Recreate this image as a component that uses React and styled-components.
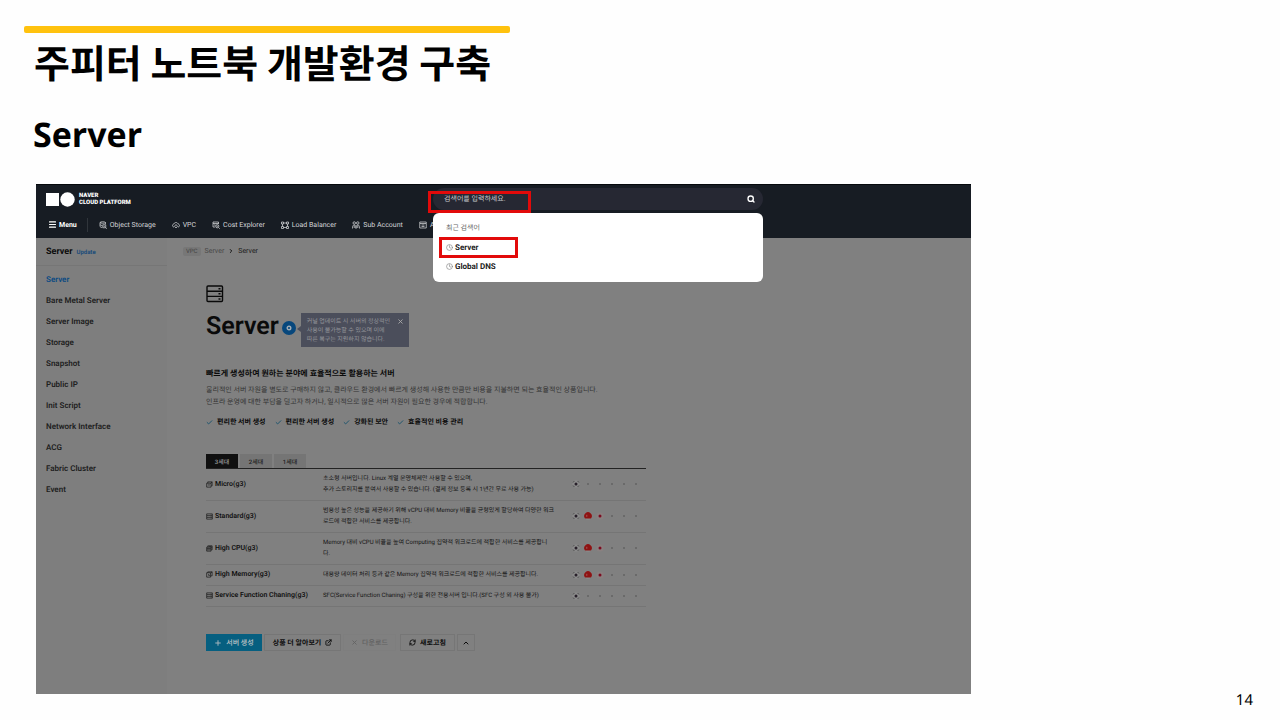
import React from 'react';
import styled, { createGlobalStyle } from 'styled-components';
import { Check, ChevronRight, ChevronUp, Clock, ExternalLink, Menu, Plus, RefreshCw, Search, X } from 'lucide-react';

const GlobalStyle = createGlobalStyle`
  * { box-sizing: border-box; }
  body {
    margin: 0;
    background: #fefefe;
    font-family: Roboto, "Noto Sans CJK KR", sans-serif;
    text-rendering: geometricPrecision;
  }
  button, input { font-family: inherit; text-rendering: inherit; }
  a { color: inherit; text-decoration: none; }
  svg { display: block; flex: none; }
`;

const Slide = styled.div`
  display: flex;
  flex-direction: column;
  min-height: 100vh;
  padding-top: 26px;
`;

const Accent = styled.div`
  width: 38%;
  height: 7px;
  margin-left: 24px;
  border-radius: 2px;
  background: #ffc20e;
`;

const SlideTitle = styled.h1`
  margin: 0 0 0 34px;
  font: 700 39px/58px "Noto Sans CJK KR", sans-serif;
  color: #000;
`;

const SlideSubtitle = styled.h2`
  margin: 18px 0 25px 33px;
  font: 700 34px/50px "Open Sans", sans-serif;
  color: #000;
`;

const SlideBody = styled.div`
  display: flex;
  flex: 1;
  padding-left: 36px;
`;

const PageNumber = styled.footer`
  flex: none;
  align-self: flex-end;
  width: 309px;
  padding: 0 27px 10px 0;
  text-align: right;
  font: 400 15px/20px "Noto Sans", sans-serif;
  color: #000;
`;

const Console = styled.div`
  flex: 1;
  align-self: flex-start;
  min-width: 0;
  margin-bottom: 26px;
  background: #808080;
  color: #141414;
`;

const Header = styled.header`
  background: #171c23;
  color: #d4d5d8;
  border-top: 1px solid #06090d;
`;

const TopRow = styled.div`
  display: flex;
  padding: 3px 0;
`;

const Brand = styled.a`
  display: flex;
  align-items: center;
  gap: 3px;
  width: 397px;
  padding-left: 10px;
  color: #fff;
  font-size: 6px;
  font-weight: 900;
  line-height: 7px;
`;

const SearchArea = styled.div`
  position: relative;
  width: 330px;
`;

const SearchField = styled.label`
  display: flex;
  align-items: center;
  height: 22px;
  padding: 0 8px 0 11px;
  border-radius: 11px;
  background: #262833;
  color: #fff;
`;

const SearchInput = styled.input`
  flex: 1;
  min-width: 0;
  padding: 0;
  border: 0;
  outline: 0;
  background: none;
  color: #fff;
  font-size: 7px;
  &::placeholder { color: #c9cacd; opacity: 1; }
`;

const Recent = styled.div`
  position: absolute;
  top: 25px;
  left: 0;
  right: 0;
  z-index: 2;
  padding: 6px 13px;
  border-radius: 6px;
  background: #fff;
`;

const RecentTitle = styled.div`
  color: #666;
  font-size: 7px;
  line-height: 19px;
`;

const RecentLink = styled.a`
  display: flex;
  align-items: center;
  gap: 2px;
  height: 19px;
  color: #222;
  font-size: 8px;
  font-weight: 700;
  svg { color: #777; }
`;

const Mark = styled.div`
  position: absolute;
  z-index: 3;
  top: ${(p) => p.$top}px;
  left: ${(p) => p.$left}px;
  width: ${(p) => p.$width}px;
  height: ${(p) => p.$height}px;
  border: 3px solid #e20a0a;
  pointer-events: none;
`;

const Nav = styled.nav`
  display: flex;
  align-items: center;
  gap: 16px;
  height: 25px;
  padding: 0 0 2px 12px;
  font-size: 7px;
  white-space: nowrap;
`;

const NavLink = styled.a`
  display: flex;
  align-items: center;
  gap: 3px;
`;

const MenuButton = styled.button`
  display: flex;
  align-items: center;
  gap: 2px;
  height: 14px;
  padding: 0 10px 0 0;
  margin-right: -5px;
  border: 0;
  border-right: 1px solid #30353b;
  background: none;
  color: #fff;
  font-size: 7px;
  font-weight: 700;
`;

const Columns = styled.div`
  display: flex;
`;

const Sidebar = styled.aside`
  flex: none;
  width: 131px;
  background: #7e7e7e;
`;

const SidebarHead = styled.div`
  display: flex;
  align-items: center;
  gap: 4px;
  height: 28px;
  padding: 1px 0 0 10px;
  border-bottom: 1px solid #767676;
  color: #0c0c0c;
  font-size: 9px;
  font-weight: 700;
`;

const Update = styled.span`
  color: #1c4c7a;
  font-size: 6px;
`;

const SideList = styled.ul`
  margin: 0;
  padding: 3px 0 0 10px;
  list-style: none;
  font-size: 8px;
  font-weight: 600;
  line-height: 21px;
`;

const SideLink = styled.a`
  color: ${(p) => (p.$active ? '#0b4a82' : '#202020')};
`;

const Main = styled.main`
  flex: 1;
  min-width: 0;
  padding-bottom: 43px;
`;

const Crumbs = styled.div`
  display: flex;
  align-items: center;
  gap: 4px;
  height: 26px;
  padding-left: 16px;
  font-size: 7px;
`;

const Crumb = styled.a`
  color: ${(p) => (p.$muted ? '#484848' : '#1b1b1b')};
`;

const Pill = styled.span`
  padding: 0 3px;
  border-radius: 2px;
  background: #777;
  color: #444;
  font-size: 6px;
  line-height: 9px;
`;

const Content = styled.div`
  padding: 21px 20px 0 39px;
`;

const TitleRow = styled.div`
  display: flex;
  margin-top: 10px;
`;

const Title = styled.h3`
  margin: 0;
  color: #0a0a0a;
  font-size: 25px;
  line-height: 27px;
  font-weight: 600;
`;

const Badge = styled.span`
  display: flex;
  align-items: center;
  justify-content: center;
  width: 14px;
  height: 14px;
  margin: 8px 5px 0 3px;
  border-radius: 50%;
  background: #07477c;
`;

const Notice = styled.div`
  position: relative;
  display: flex;
  gap: 7px;
  padding: 4px 5px 3px 6px;
  background: #4b4e5b;
  color: #96979c;
  font-size: 6px;
  line-height: 9px;
  white-space: nowrap;
  &::before {
    content: '';
    position: absolute;
    top: 13px;
    left: -4px;
    border: solid transparent;
    border-width: 3px 4px 3px 0;
    border-right-color: #4b4e5b;
  }
`;

const CloseButton = styled.button`
  display: flex;
  align-self: flex-start;
  padding: 1px 0 0;
  border: 0;
  background: none;
  color: #aaa;
`;

const Lead = styled.h4`
  margin: 21px 0 4px;
  color: #0a0a0a;
  font-size: 8px;
  font-weight: 700;
  line-height: 12px;
`;

const Description = styled.p`
  margin: 0;
  color: #333;
  font-size: 7px;
  line-height: 12px;
`;

const Features = styled.ul`
  display: flex;
  gap: 9px;
  margin: 8px 0 26px;
  padding: 0;
  list-style: none;
  color: #0a0a0a;
  font-size: 7px;
  font-weight: 700;
  line-height: 12px;
  li { display: flex; align-items: center; gap: 4px; }
  svg { color: #12506b; }
`;

const Tabs = styled.div`
  display: flex;
  gap: 2px;
`;

const Tab = styled.button`
  width: 32px;
  height: 14px;
  padding: 0;
  border: 0;
  background: ${(p) => (p.$active ? '#101010' : '#757575')};
  color: ${(p) => (p.$active ? '#999' : '#222')};
  font-size: 6px;
  font-weight: 500;
`;

const ServerTable = styled.table`
  width: 440px;
  max-width: 100%;
  border-collapse: collapse;
  border-top: 1px solid #222;
  table-layout: fixed;
  font-size: 6px;
  line-height: 11px;
  tr { border-bottom: 1px solid #757575; }
  th, td { padding: 4px 0 5px; text-align: left; white-space: nowrap; }
  th { width: 117px; color: #111; font-size: 7px; font-weight: 600; }
  td:last-child { width: 76px; }
`;

const TypeName = styled.div`
  display: flex;
  align-items: center;
  gap: 2px;
`;

const Regions = styled.div`
  display: grid;
  grid-template-columns: repeat(6, 12px);
  justify-items: center;
  align-items: center;
`;

const Actions = styled.div`
  display: flex;
  gap: 2px;
  margin-top: 27px;
`;

const ActionButton = styled.button`
  display: flex;
  align-items: center;
  justify-content: center;
  gap: 4px;
  width: ${(p) => p.$width}px;
  height: 17px;
  margin-left: ${(p) => p.$gap || 0}px;
  padding: 0;
  border: 1px solid ${(p) => (p.$primary ? '#065f80' : '#767676')};
  background: ${(p) => (p.$primary ? '#065f80' : '#808080')};
  color: ${(p) => (p.$primary ? '#a3b4bb' : '#0c0c0c')};
  font-size: 7px;
  font-weight: 700;
  white-space: nowrap;
  &:disabled { border-color: #7e7e7e; color: #626262; font-weight: 500; }
`;

const Glyph = ({ name, size = 8 }) => (
  <svg width={size} height={size} viewBox="0 0 16 16" fill="none" stroke="currentColor" strokeWidth="1.5">
    {name === 'storage' && (
      <>
        <path d="M13 6V3c-1-2-10-2-11 0v8c1 1 2 2 4 2M2 3c1 2 10 2 11 0M2 7c1 1 2 2 4 2" />
        <path d="M7.5 7.5h6v6h-6zM13 13l2.5 2.5M9 10.5h3" />
      </>
    )}
    {name === 'vpc' && (
      <>
        <path d="M4 12C0 12 0 6 4 6c1-4 7-4 8 0 4 0 4 6 0 6" />
        <path d="M8 7l3 3.5-3 3.5-3-3.5z" />
      </>
    )}
    {name === 'cost' && (
      <>
        <path d="M6 12H2V2h11v4M2 5h11M4 8h3" />
        <circle cx="10.5" cy="10.5" r="3.2" />
        <path d="M13 13l2.5 2.5M9 10.5h3" />
      </>
    )}
    {name === 'balancer' && <path d="M1 2h4v4H1zM11 2h4v4h-4zM1 11h4v4H1zM11 11h4v4h-4zM5 4h6M3 6v5M13 6v5M5 13h6" />}
    {name === 'account' && (
      <>
        <circle cx="4.5" cy="4" r="2.5" />
        <circle cx="11.5" cy="4" r="2.5" />
        <path d="M1 15c0-5 1-7 3.5-7S8 10 8 15c0-5 1-7 3.5-7S15 10 15 15M4.5 9v5M11.5 9v5" />
      </>
    )}
    {name === 'api' && <path d="M1.5 2h13v12h-13zM2 5h12M5 8h6M5 11h6" />}
    {name === 'server' && <path d="M1.5 2h13v12h-13zM2 6h12M2 10h12M11 4h1M11 8h1M11 12h1" />}
    {name === 'micro' && <path d="M1.5 5h10v9h-10zM4 5V2h10v9h-2M4 9h5M11 5l3-3" />}
    {name === 'cpu' && <path d="M1.5 5h10v9h-10zM4 5V2h10v9h-2M2 8h9M2 11h9M6 3h7M12 6h2" />}
    {name === 'memory' && <path d="M1.5 4h9v10h-9zM4 4V2h10v9h-3M6 7v3h3M11 4l3-2" />}
  </svg>
);

const ServerIcon = () => (
  <svg width="18" height="18" viewBox="0 0 18 18" fill="none" stroke="#090909" strokeWidth="1.4">
    <rect x="1" y="1" width="15.5" height="15.5" rx="1" />
    <path d="M1 6.2h15.5M1 11.4h15.5M12.5 3.7h2M12.5 8.8h2M12.5 14h2" />
  </svg>
);

const Flag = ({ code }) => (
  <svg width="8" height="8" viewBox="0 0 8 8">
    {code === 'kr' && (
      <>
        <circle cx="4" cy="4" r="3.6" fill="#8b8b8b" />
        <path d="M1.2 2.4l1-1.2M6.8 2.4l-1-1.2M1.2 5.6l1 1.2M6.8 5.6l-1 1.2" stroke="#2c2c2c" strokeWidth=".8" />
        <circle cx="4" cy="4" r="1.5" fill="#28202a" />
      </>
    )}
    {code === 'sg' && (
      <>
        <circle cx="4" cy="4" r="3.8" fill="#8b8b8b" />
        <path d="M1 6.4A3.8 3.8 0 1 1 7 6.4z" fill="#8e1212" />
        <path d="M2.8 2.8v2" stroke="#a77" strokeWidth=".7" />
      </>
    )}
    {code === 'jp' && (
      <>
        <circle cx="4" cy="4" r="3.6" fill="#8a8080" />
        <circle cx="4" cy="4" r="1.5" fill="#7b0b20" />
      </>
    )}
    {!code && <circle cx="4" cy="4" r="1" fill="#636363" />}
  </svg>
);

const services = [
  ['storage', 'Object Storage'],
  ['vpc', 'VPC'],
  ['cost', 'Cost Explorer'],
  ['balancer', 'Load Balancer'],
  ['account', 'Sub Account'],
  ['api', 'A'],
];

const sideItems = [
  'Server', 'Bare Metal Server', 'Server Image', 'Storage', 'Snapshot', 'Public IP',
  'Init Script', 'Network Interface', 'ACG', 'Fabric Cluster', 'Event',
];

const features = ['편리한 서버 생성', '편리한 서버 생성', '강화된 보안', '효율적인 비용 관리'];

const servers = [
  {
    icon: 'micro',
    name: 'Micro(g3)',
    lines: ['초소형 서버입니다. Linux 계열 운영체제만 사용할 수 있으며,', '추가 스토리지를 붙여서 사용할 수 있습니다. (결제 정보 등록 시 1년간 무료 사용 가능)'],
    regions: ['kr'],
  },
  {
    icon: 'server',
    name: 'Standard(g3)',
    lines: ['범용성 높은 성능을 제공하기 위해 vCPU 대비 Memory 비율을 균형있게 할당하여 다양한 워크', '로드에 적합한 서비스를 제공합니다.'],
    regions: ['kr', 'sg', 'jp'],
  },
  {
    icon: 'cpu',
    name: 'High CPU(g3)',
    lines: ['Memory 대비 vCPU 비율을 높여 Computing 집약적 워크로드에 적합한 서비스를 제공합니', '다.'],
    regions: ['kr', 'sg', 'jp'],
  },
  {
    icon: 'memory',
    name: 'High Memory(g3)',
    lines: ['대용량 데이터 처리 등과 같은 Memory 집약적 워크로드에 적합한 서비스를 제공합니다.'],
    regions: ['kr', 'sg', 'jp'],
  },
  {
    icon: 'server',
    name: 'Service Function Chaning(g3)',
    lines: ['SFC(Service Function Chaning) 구성을 위한 전용서버 입니다.(SFC 구성 외 사용 불가)'],
    regions: ['kr'],
  },
];

const ConsoleHeader = () => (
  <Header>
    <TopRow>
      <Brand href="#">
        <svg width="30" height="15" viewBox="0 0 30 15" fill="#fff">
          <rect x="0" y="1" width="13" height="13" />
          <circle cx="21.5" cy="7.5" r="7.2" />
        </svg>
        <span>NAVER<br />CLOUD PLATFORM</span>
      </Brand>
      <SearchArea>
        <SearchField>
          <SearchInput type="text" aria-label="검색" placeholder="검색어를 입력하세요." />
          <Search size={8} strokeWidth={4} />
        </SearchField>
        <Mark $top={3} $left={-5} $width={103} $height={22} />
        <Recent>
          <RecentTitle>최근 검색어</RecentTitle>
          <RecentLink href="#"><Clock size={7} />Server</RecentLink>
          <RecentLink href="#"><Clock size={7} />Global DNS</RecentLink>
          <Mark $top={24} $left={6} $width={79} $height={21} />
        </Recent>
      </SearchArea>
    </TopRow>
    <Nav>
      <MenuButton type="button"><Menu size={9} strokeWidth={3} />Menu</MenuButton>
      {services.map(([icon, label]) => (
        <NavLink href="#" key={label}><Glyph name={icon} />{label}</NavLink>
      ))}
    </Nav>
  </Header>
);

const ServerTypes = () => (
  <>
    <Tabs role="tablist">
      {['3세대', '2세대', '1세대'].map((label, i) => (
        <Tab key={label} type="button" role="tab" aria-selected={i === 0} $active={i === 0}>{label}</Tab>
      ))}
    </Tabs>
    <ServerTable>
      <tbody>
        {servers.map(({ icon, name, lines, regions }) => (
          <tr key={name}>
            <th scope="row"><TypeName><Glyph name={icon} size={7} />{name}</TypeName></th>
            <td>{lines.map((line) => <div key={line}>{line}</div>)}</td>
            <td>
              <Regions>
                {[0, 1, 2, 3, 4, 5].map((i) => <Flag key={i} code={regions[i]} />)}
              </Regions>
            </td>
          </tr>
        ))}
      </tbody>
    </ServerTable>
  </>
);

const App = () => (
  <>
    <GlobalStyle />
    <Slide>
      <Accent />
      <SlideTitle>주피터 노트북 개발환경 구축</SlideTitle>
      <SlideSubtitle>Server</SlideSubtitle>
      <SlideBody>
        <Console>
          <ConsoleHeader />
          <Columns>
            <Sidebar>
              <SidebarHead>Server <Update>Update</Update></SidebarHead>
              <SideList>
                {sideItems.map((item, i) => (
                  <li key={item}><SideLink href="#" $active={i === 0}>{item}</SideLink></li>
                ))}
              </SideList>
            </Sidebar>
            <Main>
              <Crumbs>
                <Pill>VPC</Pill>
                <Crumb href="#" $muted>Server</Crumb>
                <ChevronRight size={6} strokeWidth={4} />
                <Crumb href="#">Server</Crumb>
              </Crumbs>
              <Content>
                <ServerIcon />
                <TitleRow>
                  <Title>Server</Title>
                  <Badge>
                    <svg width="6" height="6" viewBox="0 0 6 6" fill="none" stroke="#a3adb5" strokeWidth="1.4">
                      <circle cx="3" cy="3" r="1.8" />
                    </svg>
                  </Badge>
                  <Notice>
                    <span>커널 업데이트 시 서버의 정상적인<br />사용이 불가능할 수 있으며 이에<br />따른 복구는 지원하지 않습니다.</span>
                    <CloseButton type="button" aria-label="닫기"><X size={7} strokeWidth={3} /></CloseButton>
                  </Notice>
                </TitleRow>
                <Lead>빠르게 생성하여 원하는 분야에 효율적으로 활용하는 서버</Lead>
                <Description>
                  물리적인 서버 자원을 별도로 구매하지 않고, 클라우드 환경에서 빠르게 생성해 사용한 만큼만 비용을 지불하면 되는 효율적인 상품입니다.
                  <br />
                  인프라 운영에 대한 부담을 덜고자 하거나, 일시적으로 많은 서버 자원이 필요한 경우에 적합합니다.
                </Description>
                <Features>
                  {features.map((text, i) => <li key={i}><Check size={7} strokeWidth={3} />{text}</li>)}
                </Features>
                <ServerTypes />
                <Actions>
                  <ActionButton type="button" $primary $width={56}><Plus size={8} strokeWidth={3} />서버 생성</ActionButton>
                  <ActionButton type="button" $width={77}>상품 더 알아보기<ExternalLink size={7} strokeWidth={3} /></ActionButton>
                  <ActionButton type="button" disabled $width={53}><X size={7} strokeWidth={3} />다운로드</ActionButton>
                  <ActionButton type="button" $width={55} $gap={2}><RefreshCw size={7} strokeWidth={3} />새로고침</ActionButton>
                  <ActionButton type="button" aria-label="접기" $width={18}><ChevronUp size={8} strokeWidth={3} /></ActionButton>
                </Actions>
              </Content>
            </Main>
          </Columns>
        </Console>
        <PageNumber>14</PageNumber>
      </SlideBody>
    </Slide>
  </>
);

export default App;
